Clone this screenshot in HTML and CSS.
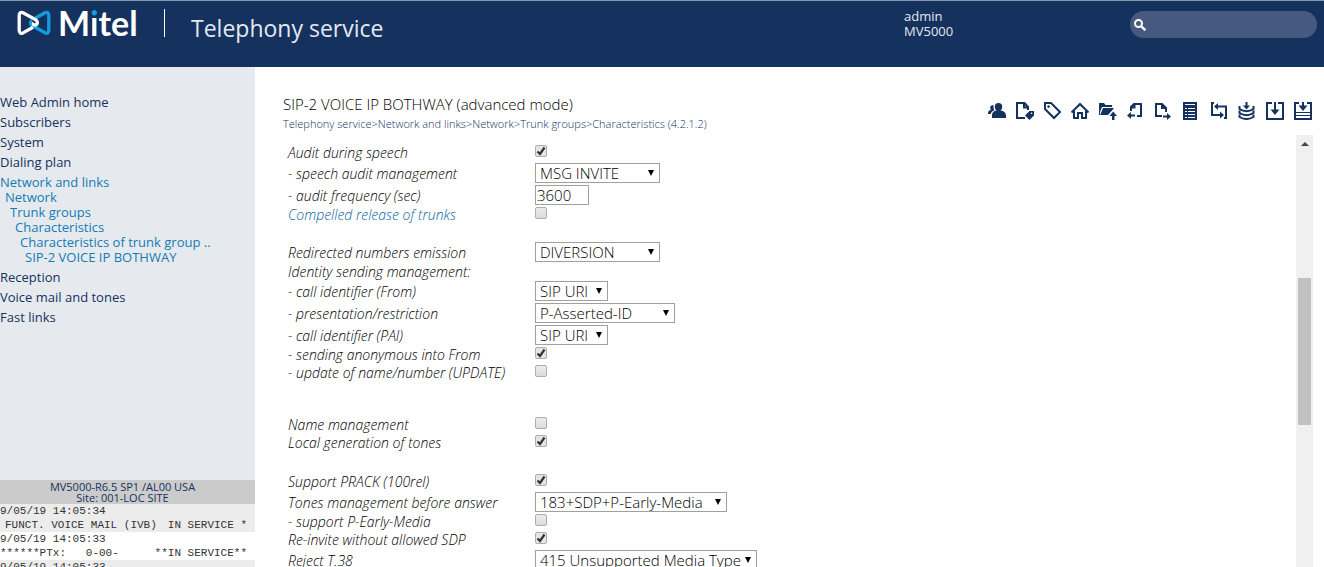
FILE: index.html
```
<!DOCTYPE html>
<html lang="en">
<head>
    <meta charset="UTF-8">
    <meta name="viewport" content="width=device-width, initial-scale=1.0">
    <title>MV5000 - Telephony service</title>
    <link rel="stylesheet" href="styles.css">
</head>
<body>
    <header class="header">
        <a class="logo" href="#" aria-label="Mitel">
            <svg class="logo-mark" viewBox="0 0 34 26" fill="none" stroke-width="3.3" stroke-linejoin="round">
                <path stroke="#149ddd" d="M18 8.300L28 2.700C30.500 1.600 31.800 3 31.800 5.500V20C31.800 22.700 30.500 24 28 22.800L15.500 15.800C13 14.300 13 11.800 15 10.500"/>
                <path stroke="#fff" d="M16 17.300L6 22.900C3.500 24 2.200 22.700 2.200 20V5.500C2.200 3 3.500 1.600 6 2.700L18.500 9.600C21 11.300 21 13.800 18.800 15C17 15.600 16 14.300 16.800 12.800"/>
            </svg>
            <span class="logo-name">M<span class="logo-i">i</span>tel</span>
        </a>
        <span class="service">Telephony service</span>
        <div class="user">admin<br>MV5000</div>
        <label class="search">
            <svg class="search-icon" viewBox="0 0 12 12" fill="none" stroke="#fff">
                <circle cx="4.500" cy="4.500" r="3.500" stroke-width="2"/>
                <path d="M7.200 7.200L11.300 11.300" stroke-width="2.300"/>
            </svg>
            <input type="text" aria-label="Search">
        </label>
    </header>

    <div class="page">
        <aside class="sidebar">
            <nav class="menu">
                <a href="#">Web Admin home</a>
                <a href="#">Subscribers</a>
                <a href="#">System</a>
                <a href="#">Dialing plan</a>
                <a class="open" href="#">Network and links</a>
                <div class="submenu">
                    <a href="#">Network</a>
                    <div class="submenu">
                        <a href="#">Trunk groups</a>
                        <div class="submenu">
                            <a href="#">Characteristics</a>
                            <div class="submenu">
                                <a href="#">Characteristics of trunk group ..</a>
                                <div class="submenu">
                                    <a href="#">SIP-2 VOICE IP BOTHWAY</a>
                                </div>
                            </div>
                        </div>
                    </div>
                </div>
                <a href="#">Reception</a>
                <a href="#">Voice mail and tones</a>
                <a href="#">Fast links</a>
            </nav>
            <div class="events">
                <div class="site">MV5000-R6.5 SP1 /AL00 USA<br>Site: 001-LOC SITE</div>
                <div class="event">
                    <div class="line">9/05/19 14:05:34</div>
                    <div class="line"><span class="indent">FUNCT. VOICE MAIL (IVB)</span><span>IN SERVICE *</span></div>
                </div>
                <div class="event">
                    <div class="line">9/05/19 14:05:33</div>
                    <div class="line"><span>******PTx:&nbsp;&nbsp; 0-00-</span><span>**IN SERVICE**</span></div>
                </div>
                <div class="event">
                    <div class="line">9/05/19 14:05:33</div>
                </div>
            </div>
        </aside>

        <main class="main">
            <div class="title-bar">
                <div>
                    <h1>SIP-2 VOICE IP BOTHWAY (advanced mode)</h1>
                    <div class="path"><a href="#">Telephony service</a>&gt;<a href="#">Network and links</a>&gt;<a href="#">Network</a>&gt;<a href="#">Trunk groups</a>&gt;<a href="#">Characteristics (4.2.1.2)</a></div>
                </div>
                <div class="tools">
                    <button aria-label="Subscribers"><svg viewBox="0 0 18 18"><path class="fill" d="M10.500 1a3.700 3.700 0 0 1 3.700 3.700c0 1.800-.8 3-1.600 3.800 3 .5 5.400 2 5.400 5V16H4v-2.700c0-3 2-4.300 4.500-4.800-1-.8-1.700-2-1.700-3.800A3.700 3.700 0 0 1 10.500 1z"/><path class="fill" d="M5.500 3v2c0 1.500.4 2.500 1 3.300C4.300 9 3 10.500 2.800 12H0v-1c0-1.800 1.300-2.700 3-3.200C1.200 6 2.500 3 5.500 3z"/></svg></button>
                    <button aria-label="Edit labels"><svg viewBox="0 0 18 18"><path d="M9 16H1V1h7.500L12 5v3M8 1v4.500h4"/><path class="fill" d="M18 9v4.500L13.500 18 9 13.500 13.500 9z"/><circle class="hole" cx="15.500" cy="11.200" r=".8"/></svg></button>
                    <button aria-label="Label"><svg viewBox="0 0 18 18"><path d="M1 1h6l9 9-6 6-9-9z"/><circle class="fill" cx="4.600" cy="4.600" r="1.300"/></svg></button>
                    <button aria-label="Home"><svg viewBox="0 0 18 18"><path d="M.5 10.500L9 2l8.500 8.500M3 9v7h4v-5h4v5h4V9"/></svg></button>
                    <button aria-label="Upload folder"><svg viewBox="0 0 18 18"><path class="fill" d="M0 1h5l1.500 2H13v2H3L1 10v3H0z"/><path class="fill" d="M4 6h11l-1.500 2L9 13H1.200z"/><path class="halo" d="M14.200 9.500L18 14h-2.500v4h-2.500v-4h-2.500z"/></svg></button>
                    <button aria-label="Import"><svg viewBox="0 0 18 18"><path d="M4 9V5l3-3h7v12h-4M4 5.500h3.500V2"/><path d="M2 13.500h6"/><path class="fill" d="M0 13.500L4 10v7z"/></svg></button>
                    <button aria-label="Export"><svg viewBox="0 0 18 18"><path d="M7 14H1V2h6l4 4v4M7 2v4h4"/><path d="M8 14.500h5"/><path class="fill" d="M16 14.500L12 11v7z"/></svg></button>
                    <button aria-label="List"><svg viewBox="0 0 18 18"><path class="fill" d="M0 0h14v18H0z"/><path class="cut" d="M2 2.500h10M2 6.500h2M5 6.500h7M2 9.500h2M5 9.500h7M2 12.500h2M5 12.500h7M2 15.500h2M5 15.500h7"/></svg></button>
                    <button aria-label="Exchange"><svg viewBox="0 0 18 18"><path d="M3 1H1v12h9M5 4.500h10V16h-2"/><path class="fill" d="M3 4.500L7 1v7zM13 13L9 9.500v7z"/></svg></button>
                    <button aria-label="Save to database"><svg viewBox="0 0 18 18"><path d="M8.500 0v5M1.500 4v3q7 4.500 14 0V4M1.500 8.500V11q7 4.500 14 0V8.500M1.500 12.500V15q7 4 14 0v-2.500"/><path class="fill" d="M8.500 7.500L5 3.500h7z"/></svg></button>
                    <button aria-label="Download"><svg viewBox="0 0 18 18"><path d="M6 1H1v16h16V1h-5M9 0v9"/><path class="fill" d="M9 13L4.500 7.500h9z"/></svg></button>
                    <button aria-label="Download all"><svg viewBox="0 0 18 18"><path d="M5 1H1v16h16V1h-4M9 0v4"/><path class="thin" d="M1 10.500h16M1 13.500h16"/><path class="fill" d="M9 9L4.500 3.500h9z"/></svg></button>
                </div>
            </div>

            <div class="content">
                <form class="form">
                    <table class="settings">
                        <tr><td><label for="audit">Audit during speech</label></td><td><input type="checkbox" id="audit" checked></td></tr>
                        <tr class="field"><td><label for="speech">- speech audit management</label></td><td><select id="speech" class="w-small"><option>MSG INVITE</option></select></td></tr>
                        <tr class="field"><td><label for="freq">- audit frequency (sec)</label></td><td><input type="text" id="freq" value="3600"></td></tr>
                        <tr><td><label class="link" for="release">Compelled release of trunks</label></td><td><input type="checkbox" id="release"></td></tr>
                        <tr class="text"><td></td><td></td></tr>
                        <tr class="field"><td><label for="redirect">Redirected numbers emission</label></td><td><select id="redirect" class="w-small"><option>DIVERSION</option></select></td></tr>
                        <tr class="text"><td>Identity sending management:</td><td></td></tr>
                        <tr class="field"><td><label for="from">- call identifier (From)</label></td><td><select id="from" class="w-tiny"><option>SIP URI</option></select></td></tr>
                        <tr class="field"><td><label for="restriction">- presentation/restriction</label></td><td><select id="restriction" class="w-medium"><option>P-Asserted-ID</option></select></td></tr>
                        <tr class="field"><td><label for="pai">- call identifier (PAI)</label></td><td><select id="pai" class="w-tiny"><option>SIP URI</option></select></td></tr>
                        <tr><td><label for="anonymous">- sending anonymous into From</label></td><td><input type="checkbox" id="anonymous" checked></td></tr>
                        <tr><td><label for="update">- update of name/number (UPDATE)</label></td><td><input type="checkbox" id="update"></td></tr>
                        <tr class="text"><td></td><td></td></tr>
                        <tr class="text"><td></td><td></td></tr>
                        <tr><td><label for="name">Name management</label></td><td><input type="checkbox" id="name"></td></tr>
                        <tr><td><label for="tones">Local generation of tones</label></td><td><input type="checkbox" id="tones" checked></td></tr>
                        <tr class="space"><td></td><td></td></tr>
                        <tr><td><label for="prack">Support PRACK (100rel)</label></td><td><input type="checkbox" id="prack" checked></td></tr>
                        <tr class="field"><td><label for="before">Tones management before answer</label></td><td><select id="before" class="w-large"><option>183+SDP+P-Early-Media</option></select></td></tr>
                        <tr><td><label for="early">- support P-Early-Media</label></td><td><input type="checkbox" id="early"></td></tr>
                        <tr><td><label for="reinvite">Re-invite without allowed SDP</label></td><td><input type="checkbox" id="reinvite" checked></td></tr>
                        <tr class="field"><td><label for="reject">Reject T.38</label></td><td><select id="reject" class="w-full"><option>415 Unsupported Media Type</option></select></td></tr>
                    </table>
                </form>
                <div class="scrollbar">
                    <svg class="scroll-up" viewBox="0 0 8 4"><path d="M4 0l4 4H0z"/></svg>
                    <div class="scroll-thumb"></div>
                </div>
            </div>
        </main>
    </div>
</body>
</html>
```
FILE: styles.css
```
* {
    box-sizing: border-box;
}
body {
    margin: 0;
    height: 100vh;
    display: flex;
    flex-direction: column;
    overflow: hidden;
    font-family: "Open Sans", "Noto Sans", sans-serif;
    font-size: 13px;
    color: #000;
    background: #fff;
}
a {
    color: inherit;
    text-decoration: none;
}

/* header */
.header {
    display: flex;
    align-items: flex-start;
    flex: none;
    height: 67px;
    padding-right: 7px;
    background: #15325f;
    border-top: 1px solid #8a97ad;
    color: #fff;
}
.logo {
    display: flex;
    align-items: center;
    width: 165px;
    height: 28px;
    margin-top: 8px;
    padding-left: 17px;
    border-right: 1px solid #fff;
}
.logo-mark {
    width: 34px;
    height: 26px;
    margin-right: 7px;
}
.logo-name {
    font-family: Lato, sans-serif;
    font-size: 34px;
    font-weight: 700;
    line-height: 28px;
}
.logo-i {
    background: linear-gradient(#149ddd 15px, #fff 15px);
    -webkit-background-clip: text;
    background-clip: text;
    color: transparent;
}
.service {
    flex: 1;
    padding: 12px 0 0 26px;
    font-size: 23px;
    line-height: 30px;
    color: #e4e8ef;
}
.user {
    width: 226px;
    padding-top: 8px;
    line-height: 15px;
    color: #e4e8ef;
}
.search {
    display: flex;
    align-items: center;
    width: 187px;
    height: 27px;
    margin-top: 10px;
    padding: 0 4px;
    border-radius: 14px;
    background: #465a80;
}
.search-icon {
    flex: none;
    width: 12px;
    height: 12px;
}
.search input {
    flex: 1;
    min-width: 0;
    border: none;
    outline: none;
    background: none;
    color: #fff;
}

.page {
    display: flex;
    flex: 1;
    min-height: 0;
}

/* sidebar */
.sidebar {
    display: flex;
    flex-direction: column;
    justify-content: space-between;
    flex: none;
    width: 255px;
    overflow: hidden;
    background: #e6eaef;
}
.menu {
    padding-top: 23px;
    color: #15325f;
}
.menu a {
    display: block;
    padding-top: 5px;
    line-height: 15px;
}
.menu .open,
.submenu {
    color: #147bb3;
}
.submenu {
    padding-left: 5px;
}
.menu .submenu a {
    padding-top: 0;
}
.events {
    height: 87px;
    overflow: hidden;
    background: #fff;
}
.site {
    padding: 1px 10px 1px 0;
    background: #cbcbcb;
    color: #15325f;
    font-size: 11px;
    line-height: 11px;
    text-align: center;
}
.event {
    padding-right: 8px;
    font-family: "Liberation Mono", monospace;
    font-size: 11px;
    line-height: 14px;
    color: #333;
}
.event:nth-child(even) {
    background: #ececec;
}
.line {
    display: flex;
    justify-content: space-between;
    white-space: nowrap;
}
.indent {
    padding-left: 5px;
}

/* main */
.main {
    display: flex;
    flex-direction: column;
    flex: 1;
    min-width: 0;
    padding: 27px 11px 0 28px;
}
.title-bar {
    display: flex;
    justify-content: space-between;
    flex: none;
    height: 41px;
}
h1 {
    margin: 0;
    font-size: 15px;
    font-weight: 300;
    line-height: 20px;
}
.path {
    font-size: 11px;
    font-weight: 300;
    line-height: 20px;
    color: #15325f;
}
.tools {
    display: flex;
    justify-content: space-between;
    align-items: flex-start;
    width: 325px;
    padding: 8px 1px 0 0;
}
.tools button {
    width: 18px;
    height: 18px;
    padding: 0;
    border: none;
    background: none;
    cursor: pointer;
}
.tools svg {
    display: block;
    width: 18px;
    height: 18px;
    fill: none;
    stroke: #15325f;
    stroke-width: 2;
}
.tools .fill {
    fill: #15325f;
    stroke: none;
}
.tools .hole {
    fill: #fff;
    stroke: none;
}
.tools .halo {
    fill: #15325f;
    stroke: #fff;
    paint-order: stroke;
}
.tools .cut {
    stroke: #fff;
    stroke-width: 1;
}
.tools .thin {
    stroke-width: 1;
}
.content {
    display: flex;
    justify-content: space-between;
    flex: 1;
    min-height: 0;
}
.form {
    flex: 1;
    padding: 9px 0 0 5px;
    overflow: hidden;
}

/* settings table */
.settings {
    border-collapse: collapse;
}
.settings tr {
    height: 18px;
}
.settings .field {
    height: 22px;
}
.settings .text {
    height: 17px;
}
.settings .space {
    height: 21px;
}
.settings td {
    padding: 0;
    vertical-align: top;
    font-size: 14px;
    line-height: 17px;
    font-weight: 300;
    font-style: italic;
}
.settings td:first-child {
    width: 247px;
}
.settings .field td {
    vertical-align: middle;
}
.link {
    color: #0a66a0;
}
.settings input,
.settings select {
    display: block;
    margin: 0;
    border: 1px solid #a0a0a0;
    font-family: inherit;
    font-size: 15px;
    font-weight: 300;
    color: #000;
    background-color: #fff;
}
.settings input[type="text"] {
    width: 54px;
    height: 20px;
    padding: 0 1px;
}
.settings select {
    appearance: none;
    height: 20px;
    padding: 0 4px;
    line-height: 18px;
    background-image: url("data:image/svg+xml,%3Csvg xmlns='http://www.w3.org/2000/svg' viewBox='0 0 6 6'%3E%3Cpath d='M0 0h6L3 6z'/%3E%3C/svg%3E");
    background-repeat: no-repeat;
    background-position: right 5px center;
    background-size: 6px 6px;
}
.settings .w-tiny {
    width: 73px;
}
.settings .w-small {
    width: 125px;
}
.settings .w-medium {
    width: 140px;
}
.settings .w-large {
    width: 192px;
}
.settings .w-full {
    width: 222px;
}
.settings input[type="checkbox"] {
    appearance: none;
    width: 12px;
    height: 12px;
    margin-top: 1px;
    border: 1px solid #adadad;
    border-radius: 2px;
    background: linear-gradient(#ececec, #dcdcdc);
}
.settings input[type="checkbox"]:checked {
    background: url("data:image/svg+xml,%3Csvg xmlns='http://www.w3.org/2000/svg' viewBox='0 0 10 10'%3E%3Cpath d='M1.500 5.500L4 8L8.500 1.500' fill='none' stroke='%23333' stroke-width='2.200'/%3E%3C/svg%3E") #e4e4e4;
}

/* scrollbar */
.scrollbar {
    flex: none;
    width: 17px;
    padding: 7px 2px 0;
    background: #f0f0f0;
}
.scroll-up {
    display: block;
    width: 8px;
    height: 4px;
    margin: 0 auto 132px;
    fill: #444;
}
.scroll-thumb {
    height: 147px;
    background: #c1c1c1;
}
```
